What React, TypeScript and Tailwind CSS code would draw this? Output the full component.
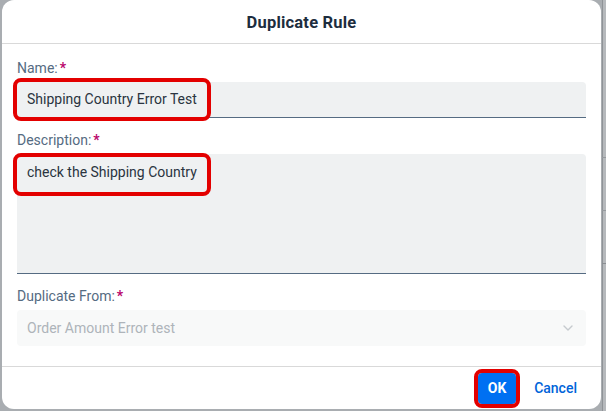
import React from "react";

const font = { fontFamily: "Roboto, 'Liberation Sans', Arial, sans-serif" };

function Label({ text }: { text: string }) {
  return (
    <div className="h-[18px] text-[14px] leading-[18px] text-[#556b82]">
      {text}
      <span className="ml-[2px] text-[#ba066c] font-bold">*</span>
    </div>
  );
}

function Highlight({ cls }: { cls: string }) {
  return (
    <div
      className={
        "pointer-events-none absolute border-[4px] border-[#e30000] rounded-[8px] " +
        cls
      }
    />
  );
}

export default function App() {
  return (
    <div
      className="relative flex h-[411px] w-[606px] overflow-hidden bg-[#a9adb1]"
      style={font}
    >
      {/* background strip to the right */}
      <div className="absolute right-0 top-0 h-full w-[4px] bg-[#b6b9bc]">
        <div className="absolute left-0 top-0 h-full w-[1px] bg-[#8f9397]" />
        <div className="absolute left-0 top-[157px] h-[1px] w-full bg-[#969a9e]" />
        <div className="absolute left-0 top-[210px] h-[1px] w-full bg-[#969a9e]" />
        <div className="absolute left-0 top-[263px] h-[1px] w-full bg-[#8a8e92]" />
      </div>

      <div className="ml-[2px] flex h-[409px] w-[599px] flex-col rounded-[12px] bg-white">
        {/* header */}
        <div className="flex h-[44px] shrink-0 items-center justify-center border-b border-[#d9d9d9] pt-[3px]">
          <span className="text-[16.5px] font-bold tracking-[0.2px] text-[#1d2d3e]">Duplicate Rule</span>
        </div>

        {/* body */}
        <div className="flex flex-1 flex-col px-[15px] pt-[15px]">
          <Label text="Name:" />
          <div className="relative mt-[5px] flex h-[36px] items-center rounded-t-[4px] border-b border-[#556b82] bg-[#eff1f2] px-[10px] text-[14px] text-[#2a3440]">
            Shipping Country Error Test
            <Highlight cls="left-[-4px] top-[-4px] h-[43px] w-[198px]" />
          </div>

          <div className="mt-[13px]">
            <Label text="Description:" />
          </div>
          <div className="relative mt-[5px] h-[120px] rounded-t-[4px] border-b border-[#556b82] bg-[#eff1f2] px-[10px] pt-[9px] text-[14px] leading-[18px] text-[#2a3440]">
            check the Shipping Country
            <Highlight cls="left-[-4px] top-[-1px] h-[43px] w-[198px]" />
          </div>

          <div className="mt-[13px]">
            <Label text="Duplicate From:" />
          </div>
          <div className="mt-[5px] flex h-[36px] items-center justify-between rounded-[4px] bg-[#f8f9f9] pl-[10px] pr-[12px] text-[14px] text-[#aeb4ba]">
            <span>Order Amount Error test</span>
            <svg width="12" height="12" viewBox="0 0 12 12" fill="none">
              <path d="M2 4 L6 8 L10 4" stroke="#c6cace" strokeWidth="1.4" strokeLinecap="round" strokeLinejoin="round" />
            </svg>
          </div>
        </div>

        {/* footer */}
        <div className="flex h-[43px] shrink-0 items-center justify-end gap-[10px] border-t border-[#d9d9d9] pr-[16px]">
          <div className="relative">
            <button className="flex h-[31px] w-[38px] items-center justify-center rounded-[4px] bg-[#0070f2] text-[14px] font-bold text-white">
              OK
            </button>
            <Highlight cls="left-[-4px] top-[-4px] h-[39px] w-[46px]" />
          </div>
          <button className="flex h-[30px] items-center px-[8px] text-[14px] font-medium text-[#0064d9]">
            Cancel
          </button>
        </div>
      </div>
    </div>
  );
}
